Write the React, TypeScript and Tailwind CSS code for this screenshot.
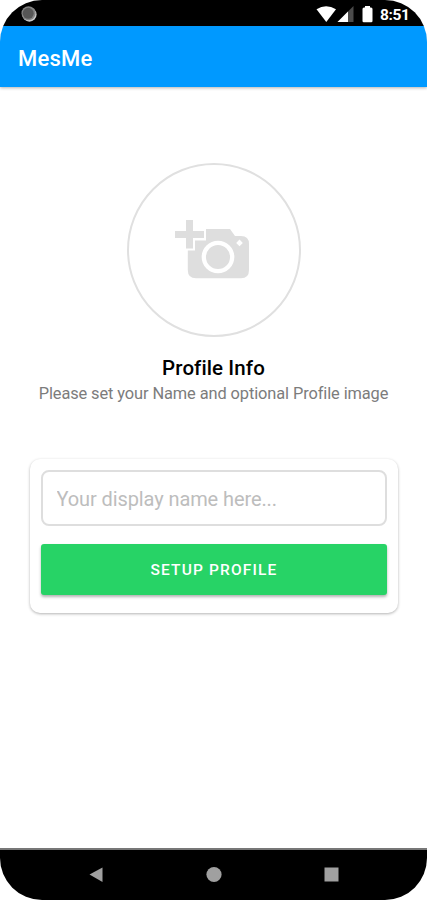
import React from "react";

function StatusBar() {
  return (
    <header className="flex h-[26px] shrink-0 items-center bg-black pr-[17px] pl-[21px]">
      <svg width="16" height="16" viewBox="0 0 16 16" className="mt-px">
        <circle cx="8.4" cy="8.5" r="7.2" fill="#c9c9c9" />
        <circle cx="7.5" cy="7.3" r="7" fill="#858585" />
        <circle cx="7.2" cy="7.3" r="5.5" fill="#565656" />
      </svg>
      <svg width="58" height="18" viewBox="0 0 58 18" className="ml-auto mt-px">
        <path d="M0.5 4.2Q10 -1.7 20 4.2L10.3 17Z" fill="#fff" />
        <path d="M37.5 1V17H21.5Z" fill="#4b4b4b" />
        <path d="M32 6.5V17H21.5Z" fill="#fff" />
        <path d="M49 1h5v1.500h1q1.5 0 1.5 1.5V16q0 1.3-1.3 1.3h-7.4q-1.3 0-1.3-1.3V4q0-1.500 1.500-1.500h1z" fill="#fff" />
      </svg>
      <span className="ml-[6px] mt-[3px] w-[30px] whitespace-nowrap text-[15.5px] leading-5 font-bold tracking-[-0.35px] text-white">8:51</span>
    </header>
  );
}

function ProfilePicture() {
  return (
    <button aria-label="Add profile image" className="flex size-[174px] items-center justify-center rounded-full border-2 border-[#e0e0e0]">
      <svg width="80" height="64" viewBox="174 218 80 64" className="-mt-px">
        <path
          d="M206 229H230L235 236H241Q249 236 249 244V270Q249 278.300 241 278.300H196Q187.800 278.300 187.800 270V250.500H195V240.500H206V229Z"
          fill="#dedede"
        />
        <path d="M186 220H193V231H204V238H193V248.500H186V238H175V231H186Z" fill="#dedede" />
        <circle cx="218" cy="257" r="14.2" fill="none" stroke="#fff" strokeWidth="4.300" />
        <path d="M239.500 239.600L242.800 242.900L239.500 246.200L236.200 242.900Z" fill="#fff" />
      </svg>
    </button>
  );
}

function NavigationBar() {
  return (
    <nav className="flex h-[52px] shrink-0 items-center justify-center border-t-2 border-[#777] bg-black">
      <svg width="252" height="18" viewBox="88 865.500 252 18" fill="#a0a0a0">
        <path d="M89.500 874L102.500 867V881.500Z" />
        <circle cx="214" cy="874" r="7.600" />
        <rect x="324.500" y="867" width="14" height="14" />
      </svg>
    </nav>
  );
}

export default function App() {
  return (
    <div className="h-[900px] w-[427px] bg-white font-[Roboto,sans-serif]">
      <div className="flex h-full flex-col overflow-hidden rounded-[42px] bg-white">
        <StatusBar />
        <div className="flex h-[61px] shrink-0 items-center bg-[#0099ff] px-[18px] pt-[4px] shadow-[0_1px_3px_rgba(0,0,0,0.3)]">
          <h1 className="text-[22px] leading-7 font-medium tracking-[0.2px] text-white">MesMe</h1>
        </div>
        <main className="flex flex-1 flex-col items-center pt-[76px]">
          <ProfilePicture />
          <h2 className="mt-[19px] text-[20.5px] leading-6 font-medium tracking-[0.1px] whitespace-nowrap text-black">Profile Info</h2>
          <p className="mt-[4px] text-[16.4px] leading-5 tracking-[-0.1px] whitespace-nowrap text-[#7c7c7c]">Please set your Name and optional Profile image</p>
          <form className="mt-[55px] flex h-[154px] w-[368px] flex-col rounded-[10px] bg-white px-[11px] pt-[11px] shadow-[0_1px_3px_rgba(0,0,0,0.3)]">
            <input
              aria-label="Display name"
              placeholder="Your display name here..."
              className="h-[56px] w-full shrink-0 rounded-[8px] border-2 border-[#dedede] pt-px pr-[13px] pl-[14px] text-[20px] tracking-[-0.1px] text-black outline-none placeholder:text-[#bdbdbd]"
            />
            <button type="button" className="mt-[18px] h-[51px] shrink-0 rounded-[3px] bg-[#27d366] pt-[3px] pl-px text-[15.5px] font-medium tracking-[1.15px] text-white shadow-[0_2px_3px_rgba(0,0,0,0.3)]">
              SETUP PROFILE
            </button>
          </form>
        </main>
        <NavigationBar />
      </div>
    </div>
  );
}
